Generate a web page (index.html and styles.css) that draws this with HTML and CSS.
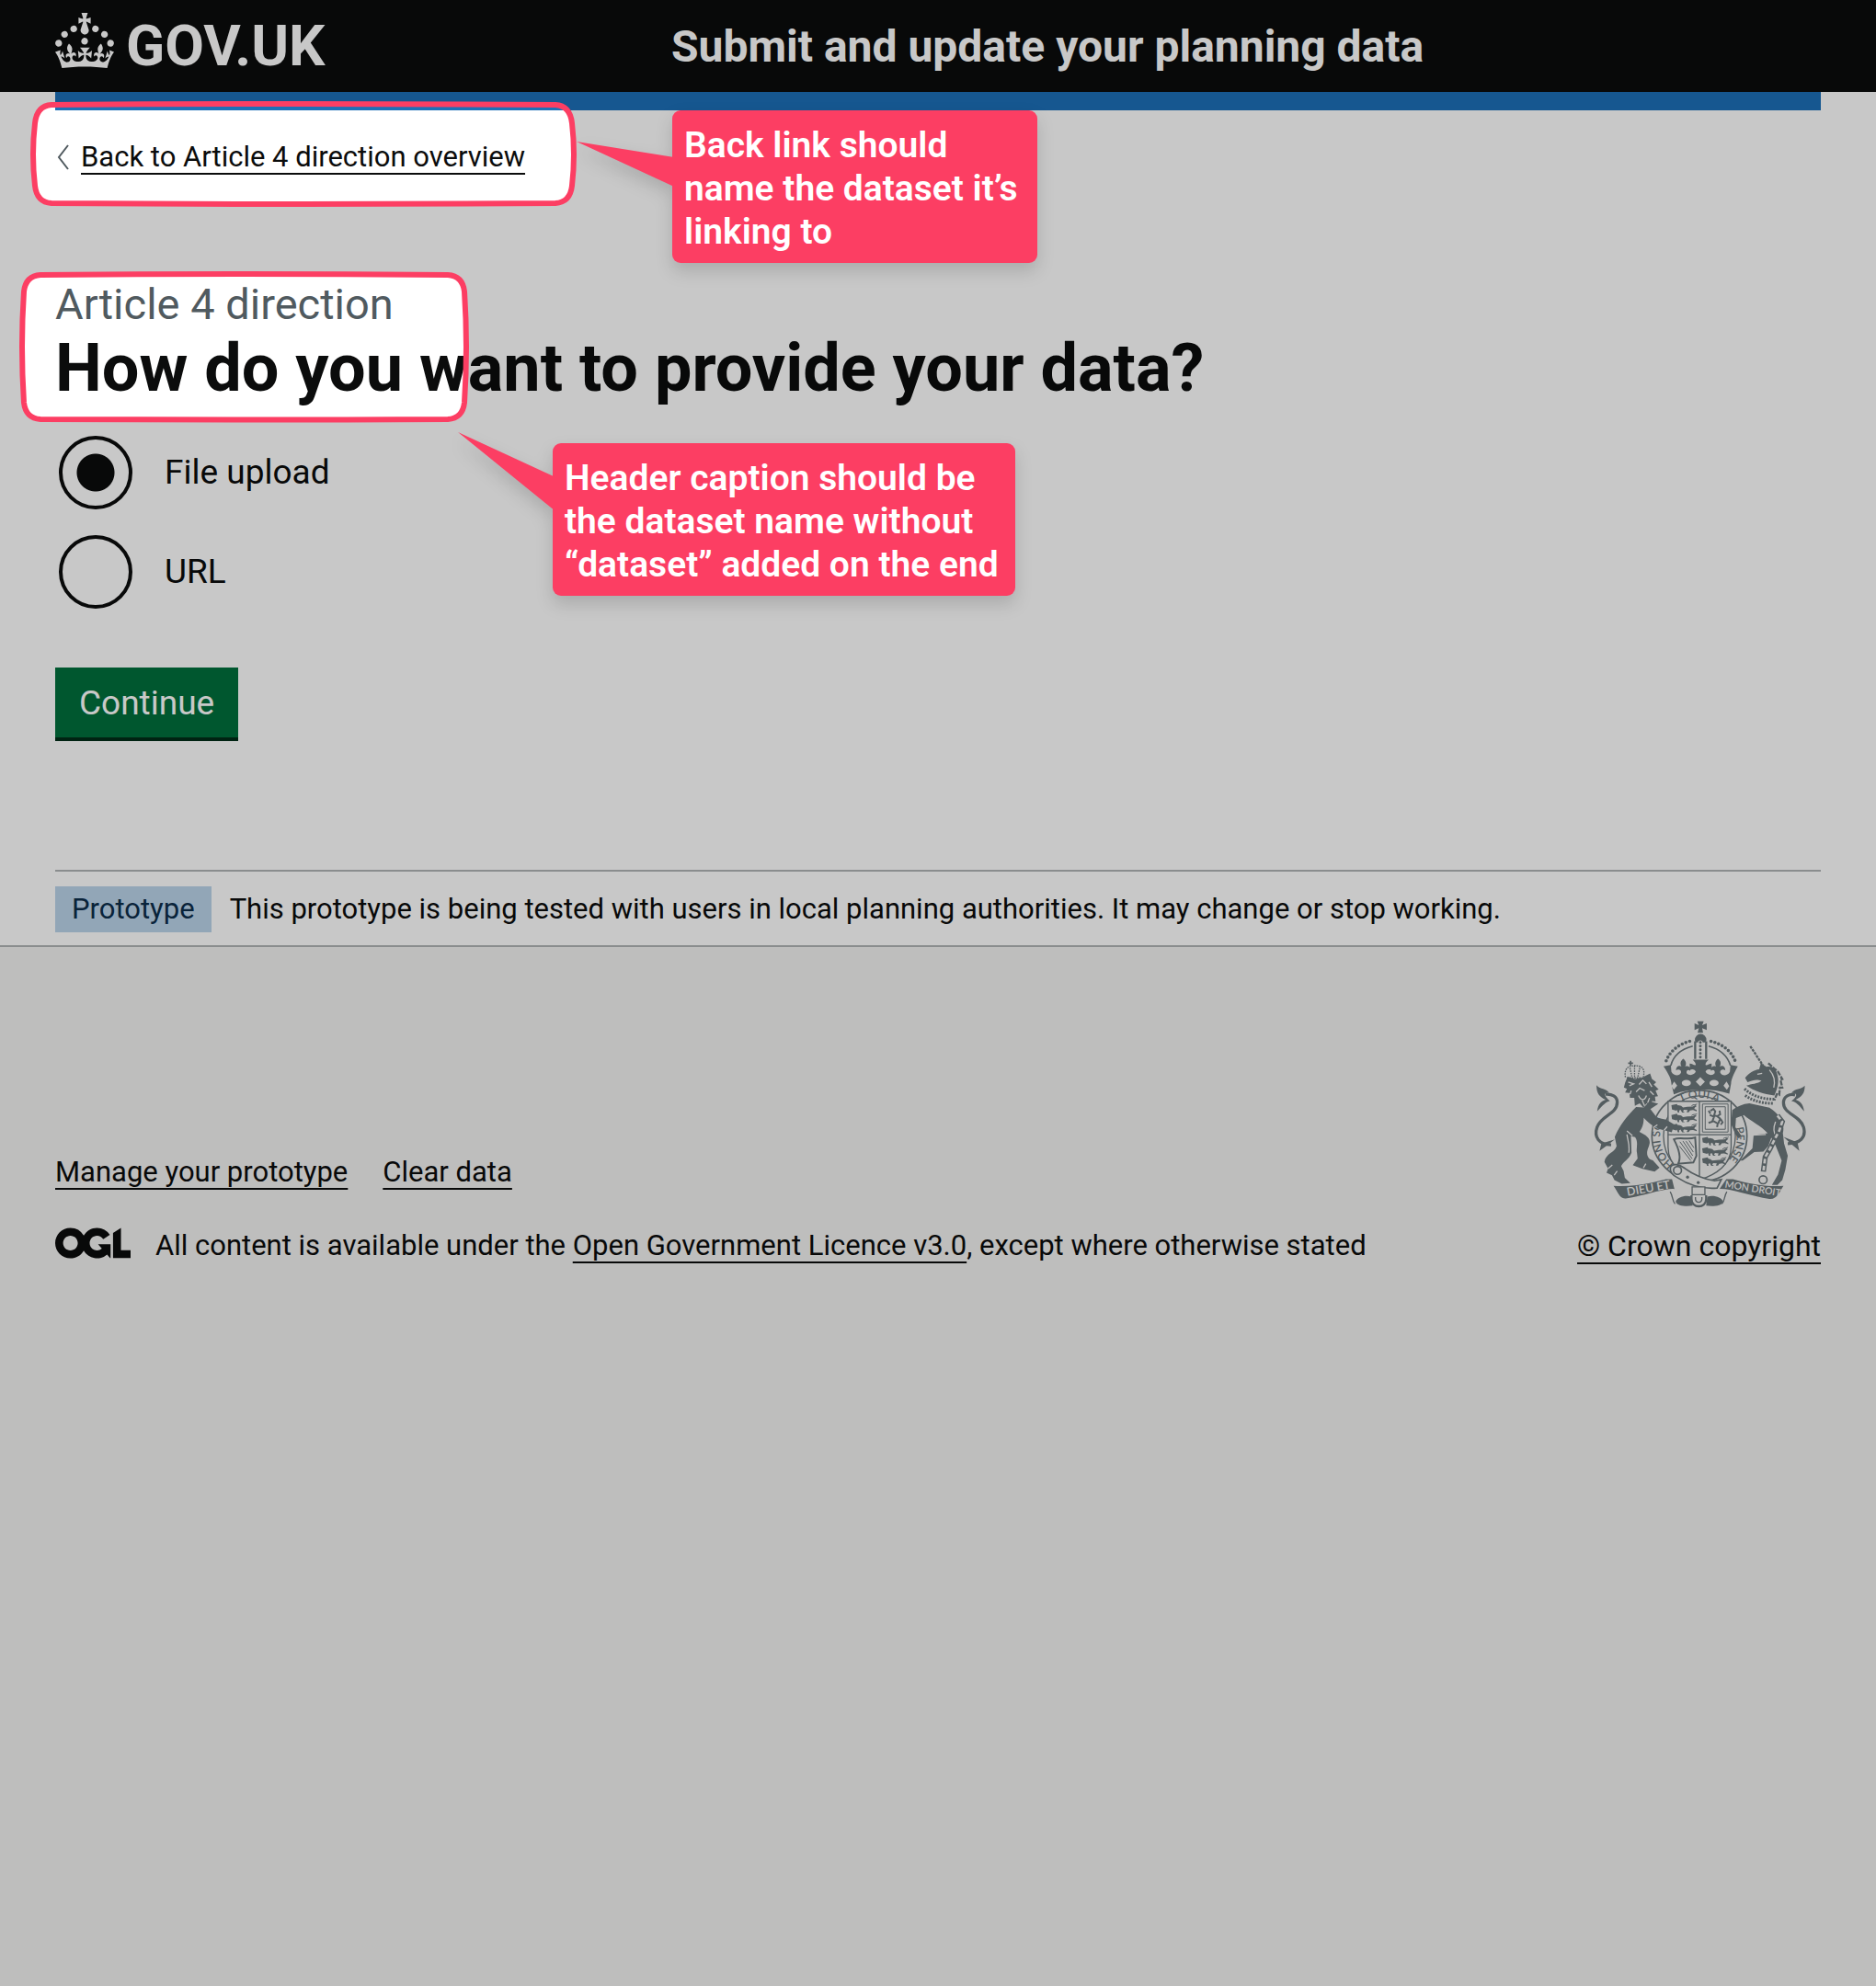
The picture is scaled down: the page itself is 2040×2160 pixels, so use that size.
FILE: index.html
```html
<!DOCTYPE html>
<html lang="en">
<head>
<meta charset="utf-8">
<meta name="viewport" content="width=device-width, initial-scale=1">
<title>How do you want to provide your data? - Submit and update your planning data</title>
<link rel="stylesheet" href="styles.css">
</head>
<body class="page">

<header class="header">
  <a class="header-logo" href="#" aria-label="GOV.UK">
    <svg class="crown" viewBox="0 0 32 30" aria-hidden="true"><path fill="currentColor" fill-rule="evenodd" d="M22.6 10.4c-1 .4-2-.1-2.4-1-.4-.9.1-2 1-2.4.9-.4 2 .1 2.4 1s-.1 2-1 2.4m-5.9 6.7c-.9.4-2-.1-2.4-1-.4-.9.1-2 1-2.4.9-.4 2 .1 2.4 1s-.1 2-1 2.4m10.8-3.7c-1 .4-2-.1-2.4-1-.4-.9.1-2 1-2.4.9-.4 2 .1 2.4 1s0 2-1 2.4m3.3 4.8c-1 .4-2-.1-2.4-1-.4-.9.1-2 1-2.4.9-.4 2 .1 2.4 1s-.1 2-1 2.4M17 4.7l2.3 1.2V2.5l-2.3.7-.2-.2.9-3h-3.4l.9 3-.2.2c-.1.1-2.3-.7-2.3-.7v3.4L15 4.7c.1.1.1.2.2.2l-1.3 4c-.1.2-.1.4-.1.6 0 1.1.8 2 1.9 2.2h.7c1-.2 1.9-1.1 1.9-2.1 0-.2 0-.4-.1-.6l-1.3-4c-.1-.2 0-.2.1-.3m-7.6 5.7c.9.4 2-.1 2.4-1 .4-.9-.1-2-1-2.4-.9-.4-2 .1-2.4 1s0 2 1 2.4m-5 3c.9.4 2-.1 2.4-1 .4-.9-.1-2-1-2.4-.9-.4-2 .1-2.4 1s.1 2 1 2.4m-3.2 4.8c.9.4 2-.1 2.4-1 .4-.9-.1-2-1-2.4-.9-.4-2 .1-2.4 1s0 2 1 2.4m14.8 11c4.4 0 8.6.3 12.3.8 1.1-4.5 2.4-7 3.7-8.8l-2.5-.9c.2 1.3.3 1.9 0 2.7-.4-.4-.8-1.1-1.1-2.3l-1.2 4c.7-.5 1.3-.8 2-.9-1.1 2.5-2.6 3.1-3.5 3-1.1-.2-1.7-1.2-1.5-2.1.3-1.2 1.5-1.5 2.1-.1 1.1-2.3-.8-3-2-2.3 1.9-1.9 2.1-3.5.6-5.6-2.1 1.6-2.1 3.2-1.2 5.5-1.2-1.4-3.2-.6-2.5 1.6.9-1.4 2.1-.5 1.9.8-.2 1.1-1.7 2.1-3.5 1.9-2.7-.2-2.9-2.1-2.9-3.6.7-.1 1.9.5 2.9 1.9l.4-4.3c-1.1 1.1-2.1 1.4-3.2 1.4.4-1.2 2.1-3 2.1-3h-5.4s1.7 1.9 2.1 3c-1.1 0-2.1-.2-3.2-1.4l.4 4.3c1-1.4 2.2-2 2.9-1.9-.1 1.5-.2 3.4-2.9 3.6-1.9.2-3.4-.8-3.5-1.9-.2-1.3 1-2.2 1.9-.8.7-2.3-1.2-3-2.5-1.6.9-2.2.9-3.9-1.2-5.5-1.5 2-1.3 3.7.6 5.6-1.2-.7-3.1 0-2 2.3.6-1.4 1.8-1.1 2.1.1.2.9-.3 1.9-1.5 2.1-.9.2-2.4-.5-3.5-3 .6 0 1.2.3 2 .9l-1.2-4c-.3 1.1-.7 1.9-1.1 2.3-.3-.8-.2-1.4 0-2.7l-2.9.9C1.3 23 2.6 25.5 3.7 30c3.7-.5 7.9-.8 12.3-.8"/></svg>
    <span>GOV.UK</span>
  </a>
  <a class="header-service" href="#">Submit and update your planning data</a>
</header>

<div class="container">
  <div class="header-bar"></div>
  <nav class="back">
    <svg class="back-arrow" viewBox="0 0 14 28" aria-hidden="true"><path d="M12 1L2 14l10 13" fill="none" stroke="#505a5f" stroke-width="2"/></svg>
    <a class="link" href="#">Back to Article 4 direction overview</a>
  </nav>

  <main>
    <p class="caption">Article 4 direction</p>
    <h1 class="title">How do you want to provide your data?</h1>
    <form class="form">
      <div class="radios">
        <div class="radio-row">
          <input class="radio" type="radio" id="file" name="source" checked>
          <label for="file">File upload</label>
        </div>
        <div class="radio-row">
          <input class="radio" type="radio" id="url" name="source">
          <label for="url">URL</label>
        </div>
      </div>
      <button class="button" type="button">Continue</button>
    </form>
  </main>

  <div class="phase">
    <strong class="tag">Prototype</strong>
    <span>This prototype is being tested with users in local planning authorities. It may change or stop working.</span>
  </div>
</div>

<footer class="footer">
  <div class="footer-meta">
    <div class="footer-links">
      <a class="link" href="#">Manage your prototype</a>
      <a class="link" href="#">Clear data</a>
    </div>
    <div class="licence">
      <svg class="ogl" viewBox="0 0 483.2 195.7" aria-hidden="true"><path fill="currentColor" d="M421.5 142.8V.1l-50.7 32.3v161.1h112.4v-50.7zm-122.3-9.6A47.12 47.12 0 0 1 221 97.8c0-26 21.1-47.1 47.1-47.1 16.7 0 31.4 8.7 39.7 21.8l42.7-27.2A97.63 97.63 0 0 0 268.1 0c-36.5 0-68.3 20.1-85.1 49.7A98 98 0 0 0 97.8 0C43.9 0 0 43.9 0 97.8s43.9 97.8 97.8 97.8c36.5 0 68.3-20.1 85.1-49.7a97.76 97.76 0 0 0 149.6 25.4l19.4 22.2h3v-87.8h-80l24.3 27.5zM97.8 145c-26 0-47.1-21.1-47.1-47.1s21.1-47.1 47.1-47.1 47.1 21.1 47.1 47.1S123.8 145 97.8 145"/></svg>
      <span>All content is available under the <a class="link" href="#">Open Government Licence v3.0</a>, except where otherwise stated</span>
    </div>
  </div>
  <a class="copyright" href="#">
    <svg class="arms" viewBox="99 88 702 616" aria-hidden="true">
      <defs>
        <path id="motto-left" d="M366 560A124 118 0 0 1 340 405"/>
        <path id="motto-top" d="M330 430A124 118 0 0 1 570 430"/>
        <path id="motto-right" d="M568 440A124 118 0 0 1 470 588"/>
        <g id="walking-lion">
          <path d="M0 3l8-3 10 2 6 5 14-2 18-1 8-4 5 3-6 4-2 5 8 4v4l-12-4-10 1-4 6h-7l3-7-12-1-3 5 6 4h-9l-5-9-5 3 1 6h-5l-3-9-6-1 3-4z"/>
          <path d="M52 2c6-6 14-2 18-6" fill="none" stroke="#6c777b" stroke-width="3"/>
        </g>
      </defs>
      <g fill="#6c777b">
        <!-- royal crown -->
        <path d="M443 90h21l-5 13 15-6v22l-15-6 3 15h-18l4-15-14 6V97l14 6z"/>
        <path d="M435 152a19 20 0 0 1 38 0l-4 8h-8c-1-9-15-9-16 0h-8z"/>
        <path d="M453 160v54" fill="none" stroke="#6c777b" stroke-width="9" stroke-linecap="round" stroke-dasharray="0 12"/>
        <path d="M418 156C380 166 350 190 338 228M488 156c40 10 70 34 82 72" fill="none" stroke="#6c777b" stroke-width="11" stroke-linecap="round" stroke-dasharray="0 13"/>
        <path d="M428 172C390 182 364 204 356 236M480 172c38 10 62 32 72 64" fill="none" stroke="#6c777b" stroke-width="5"/>
        <path d="M436 156v58M472 156v58" fill="none" stroke="#6c777b" stroke-width="7"/>
        <path d="M332 238l24-4 2 22c8 14 26 16 32 2-1-12-12-10-17-6 0-14 10-18 18-13-6-12-2-20 6-26 8 6 12 16 6 26 10-4 18 2 17 14-8-6-14 0-12 8 8 10 26 6 30-6-6-10-14-8-20-4v-22c8 0 12 6 20 5 0-10-6-12-10-18h52c-5 6-10 8-10 18 8 1 12-5 20-5v22c-6-4-14-6-20 4 4 12 22 16 30 6 2-8-4-14-12-8-1-12 7-18 17-14-6-10-2-20 6-26 8 6 12 14 6 26 8-5 18-1 18 13-5-4-16-6-17 6 6 14 24 12 32-2l2-22 24 4c-14 26-22 44-22 56l-6 34c-60-18-130-18-182 2l-8-34c0-14-8-32-26-58z"/>
        <g fill="#f3f2f1">
          <ellipse cx="407" cy="293" rx="15" ry="10"/><ellipse cx="498" cy="293" rx="15" ry="10"/>
          <path d="M453 274l15 15-15 15-15-15zM367 288l10 14-11 13-8-12zM539 288l-10 14 11 13 8-12z"/>
        </g>
        <!-- garter -->
        <ellipse cx="450" cy="467" rx="156" ry="150" fill="none" stroke="#6c777b" stroke-width="5"/>
        <ellipse cx="450" cy="467" rx="118" ry="132" fill="none" stroke="#6c777b" stroke-width="4"/>
        <g class="motto">
          <text><textPath href="#motto-left">HONI SOI</textPath></text>
          <text text-anchor="middle"><textPath href="#motto-top" startOffset="50%">T QUI A</textPath></text>
          <text><textPath href="#motto-right">PENSE</textPath></text>
        </g>
        <!-- shield -->
        <path d="M347 353h207v150c0 55-45 90-104 108-60-18-103-53-103-108z" fill="#f3f2f1" stroke="#6c777b" stroke-width="4"/>
        <path d="M450 353v250M347 463h207" stroke="#6c777b" stroke-width="4"/>
        <use href="#walking-lion" x="372" y="366"/><use href="#walking-lion" x="372" y="398"/><use href="#walking-lion" x="372" y="431"/>
        <use href="#walking-lion" x="476" y="474"/><use href="#walking-lion" x="474" y="508"/><use href="#walking-lion" x="468" y="541"/>
        <path d="M358 366l18-4 6 12-8 10-14-4zM358 398l18-4 6 12-8 10-14-4zM358 431l18-4 6 12-8 10-14-4zM459 474l18-4 6 12-8 10-14-4zM459 508l18-4 6 12-8 10-14-4zM459 541l18-4 6 12-8 10-14-4z"/>
        <path d="M460 362h84v92h-84zM469 371h66v74h-66z" fill="none" stroke="#6c777b" stroke-width="3"/>
        <path d="M486 384l10-6 6 8-4 14 10 2 10-6-2-12M484 398l14 6-6 16-12 4M496 418l14 8-2 12M508 402l10 8-6 16M480 384l6 10M520 412l6 10-6 8" fill="none" stroke="#6c777b" stroke-width="6"/>
        <path d="M366 478c22-10 44 4 70-6l4 60-10 22-50 4c12-22 2-50-14-80z" fill="none" stroke="#6c777b" stroke-width="6"/>
        <path d="M386 486l40 56M396 484l32 48M406 484l24 36M416 482l16 24M384 500l38 48" stroke="#6c777b" stroke-width="3"/>
        <!-- strap and buckle -->
        <path d="M356 568c6-12 28-8 44 4 30 22 60 36 100 42l22-4-14 28c-50 4-90-8-130-34-16-8-28-22-22-36z" fill="#f3f2f1" stroke="#6c777b" stroke-width="5"/>
        <circle cx="378" cy="580" r="13" fill="none" stroke="#6c777b" stroke-width="5"/>
        <circle cx="411" cy="602" r="5"/><circle cx="446" cy="620" r="5"/>
        <path d="M372 682c6-14 30-22 52-16l4 30c-22 2-52 2-56-14zM528 682c-6-14-30-22-52-16l-4 30c22 2 52 2 56-14z"/>
        <path d="M426 634h42v26h-42z" fill="#f3f2f1" stroke="#6c777b" stroke-width="4"/>
        <path d="M424 662v12c0 32 48 32 48 0v-12" fill="#f3f2f1" stroke="#6c777b" stroke-width="7"/>
        <path d="M437 668v6c0 14 21 14 21 0v-6" fill="none" stroke="#6c777b" stroke-width="4"/>
        <!-- lion -->
        <path d="M206 292l8-20 24 8 22-4 28-14 6 18 14 10-8 8 16 16-10 4 8 18-10 2 2 16-12-2-4 18-14-10-10 14-12-14-16 8-2-26-14 0-2-16-14-2 6-12-10-4z"/>
        <path d="M216 290l18 6-14 6M252 298l12-14 12 12M242 322l12-12 16 8M250 334c8 18 20 18 26 0M262 350l8 18M284 290l10 16M288 320l12 12M226 318l-4 12M286 342l-6 16" fill="none" stroke="#f3f2f1" stroke-width="4"/>
        <path d="M242 372c-30 30-54 60-70 98l6 30c-6 22-36 24-40 52l12 22-5 14 18 8 8 16 24 12 28-2-18-18-4-22-8-16c6-14 26-22 34-44l-2-54 14 3c12 18 2 36 6 52l2 18-16 22 32 12 40 9 16-13-22-24c-18-4-24-22-14-44 8-20 2-28-10-38l-20-12c12-16 14-30 14-46 20 22 38 34 64 40l28 8 8-26-26-16-30-6-22-28 26-18-28-8-20 20z"/>
        <path d="M212 450l18 16M212 462c2 18 10 34 6 60M150 574l14-12M170 596l10-14M266 572l8-14M298 440l14-10M334 448l10-12" fill="none" stroke="#f3f2f1" stroke-width="4"/>
        <path d="M160 496c-38 0-58-24-46-58 14-40 66-42 66-82 0-18-18-28-38-26" fill="none" stroke="#6c777b" stroke-width="10"/>
        <path d="M112 300c14 16 30 8 42 26-18-4-20 8 2 26-16 4-20 12-42 34 4-26 14-32 28-38-20-10-30-20-30-48zM172 478l-20 16-30 22 6-24z"/>
        <path d="M207 274c-6-34 16-38 31-38s36 4 28 36M212 276h50M237 236v36M222 244l6 28M254 244l-6 28" fill="none" stroke="#6c777b" stroke-width="4" stroke-dasharray="5 3"/>
        <path d="M216 228h16M224 220v16" stroke="#6c777b" stroke-width="5"/>
        <!-- unicorn -->
        <path d="M617 172l42 64" fill="none" stroke="#6c777b" stroke-width="7" stroke-dasharray="9 3"/>
        <path d="M600 276c14-18 30-26 46-28l6-20 18 12c20-4 30 6 34 20 8 20 6 44-8 74-36-4-66-14-92-32 16-6 38-6 50-16-18-6-26-2-46 4z"/>
        <path d="M676 228l20 18 12 10 14 24-6 2 6 26-8 0-2 24-8-2-8 20" fill="none" stroke="#6c777b" stroke-width="7" stroke-dasharray="16 4"/>
        <path d="M640 264l16-3M680 250c14 16 20 34 14 58" fill="none" stroke="#f3f2f1" stroke-width="4"/>
        <path d="M598 312c30 28 66 34 98 34M600 334c30 20 60 26 92 26" fill="none" stroke="#6c777b" stroke-width="9" stroke-dasharray="6 4"/>
        <path d="M558 382c16-12 34-20 56-22l66 14c32 20 52 50 44 84l4 34 12 40-8 46-10 34-16 16h-18l20-34 12-46-20-50-14-26-10 28-16 18-30 2-38 28-8 0 40-40 4-44 46-6c-20-24-56-40-78-60l-26 10-2 30 18 26-6 12-12-14-14-34z"/>
        <path d="M622 464l46-2M700 420c-8 20-8 34 2 48" fill="none" stroke="#f3f2f1" stroke-width="4"/>
        <path d="M740 492c38 0 62-18 52-54-12-40-66-42-66-80 0-22 20-30 38-26" fill="none" stroke="#6c777b" stroke-width="10"/>
        <path d="M796 302c-14 14-30 8-44 24 20-2 22 10 0 26 18 4 22 12 42 34-4-26-14-32-28-38 20-10 30-20 30-46zM726 470l22 20 30 26-6-28z"/>
        <path d="M706 400l16 20-10 30-14 26-16 32-16 28-6 48" fill="none" stroke="#6c777b" stroke-width="17"/>
        <path d="M706 400l16 20-10 30-14 26-16 32-16 28-6 48" fill="none" stroke="#f3f2f1" stroke-width="8" stroke-dasharray="15 8"/>
        <circle cx="659" cy="611" r="13" fill="none" stroke="#6c777b" stroke-width="5"/>
        <!-- scrolls -->
        <path d="M168 631c60 4 120-8 172-22h20l8 32c-30-4-104 24-160 31-22 2-26-24-40-41zM726 631c-60 4-116-8-166-22h-22l-22 32c36-2 104 24 164 33 26 2 34-26 46-43z"/>
        <path d="M354 650c10 16 6 30 16 40M540 650c-10 16-6 30-16 40" fill="none" stroke="#6c777b" stroke-width="4"/>
        <g class="scroll-text">
          <text transform="translate(214 664) rotate(-10)">DIEU ET</text>
          <text transform="translate(532 636) rotate(9)" class="scroll-small">MON DROIT</text>
        </g>
      </g>
    </svg>
    <span>© Crown copyright</span>
  </a>
</footer>

<!-- dimmed layer with two spotlit areas -->
<svg class="dimmer" aria-hidden="true">
  <defs>
    <path id="spot-back" d="M56 114Q330 112 604 114Q620 115 622 134Q626 168 622 202Q620 220 604 221Q330 223 56 221Q40 220 38 202Q34 168 38 134Q40 115 56 114Z"/>
    <path id="spot-title" d="M44 299Q265 297 487 299Q503 300 505 317Q509 377 505 438Q503 455 487 456Q265 457 44 456Q28 455 26 438Q22 377 26 317Q28 300 44 299Z"/>
    <mask id="cutouts" maskUnits="userSpaceOnUse" x="0" y="0" width="100%" height="100%">
      <rect width="100%" height="100%" fill="#fff"/>
      <use href="#spot-back"/>
      <use href="#spot-title"/>
    </mask>
  </defs>
  <rect width="100%" height="100%" fill="#000" fill-opacity=".216" mask="url(#cutouts)"/>
  <g fill="none" stroke="#fc3e63" stroke-width="6">
    <use href="#spot-back"/>
    <use href="#spot-title"/>
  </g>
</svg>

<aside class="callout callout-back">
  <svg class="pointer pointer-back" viewBox="0 0 106 50" aria-hidden="true"><path d="M0 0L106 17v32z" fill="#fc3e63"/></svg>
  <p>Back link should<br>name the dataset it’s<br>linking to</p>
</aside>
<aside class="callout callout-caption">
  <svg class="pointer pointer-caption" viewBox="0 0 106 86" aria-hidden="true"><path d="M0 0L106 49v37z" fill="#fc3e63"/></svg>
  <p>Header caption should be<br>the dataset name without<br>“dataset” added on the end</p>
</aside>

</body>
</html>
```

FILE: styles.css
```css
* {
  box-sizing: border-box;
}

html {
  background: #f3f2f1;
}

.page {
  position: relative;
  display: flex;
  flex-direction: column;
  min-height: 100vh;
  margin: 0;
  background: #fff;
  color: #0b0c0c;
  font-family: Roboto, Arial, sans-serif;
  font-size: 31px;
  line-height: 40px;
}

p,
h1 {
  margin: 0;
}

.link {
  color: inherit;
  text-decoration: underline;
  text-decoration-thickness: 2px;
  text-underline-offset: 7px;
}

/* Header */
.header {
  display: grid;
  grid-template-columns: 670px 1fr;
  align-items: center;
  height: 100px;
  padding: 0 60px;
  background: #0b0c0c;
  color: #fff;
}

.header a {
  color: inherit;
  font-weight: 700;
  text-decoration: none;
}

.header-logo {
  display: flex;
  align-items: center;
  gap: 13px;
  font-size: 62px;
  line-height: 60px;
}

.crown {
  width: 64px;
  height: 60px;
  margin-bottom: 12px;
}

.header-service {
  padding-top: 2px;
  font-size: 48px;
  line-height: 60px;
}

.container {
  padding: 0 60px;
}

.header-bar {
  height: 20px;
  background: #1d70b8;
}

/* Back link */
.back {
  display: flex;
  align-items: center;
  gap: 12px;
  margin-top: 31px;
  padding-left: 2px;
}

.back-arrow {
  width: 14px;
  height: 28px;
}

/* Question */
.caption {
  margin-top: 110px;
  color: #505a5f;
  font-size: 47px;
  line-height: 60px;
}

.title {
  font-size: 72px;
  line-height: 80px;
}

.form {
  display: flex;
  flex-direction: column;
  align-items: flex-start;
  gap: 64px;
  margin-top: 33px;
  font-size: 37px;
}

.radios {
  display: flex;
  flex-direction: column;
  gap: 28px;
}

.radio-row {
  display: flex;
  align-items: center;
  gap: 35px;
  padding-left: 4px;
}

.radio {
  appearance: none;
  width: 80px;
  height: 80px;
  margin: 0;
  border: 4px solid #0b0c0c;
  border-radius: 50%;
}

.radio:checked {
  background: radial-gradient(circle, #0b0c0c 20px, transparent 21px);
}

.button {
  margin-bottom: 4px;
  padding: 19px 26px 17px;
  border: 0;
  background: #00703c;
  box-shadow: 0 4px 0 #002d18;
  color: #fff;
  font: inherit;
  line-height: 40px;
}

/* Phase banner */
.phase {
  display: flex;
  align-items: center;
  gap: 20px;
  margin-top: 140px;
  padding: 16px 0 14px;
  border-top: 2px solid #b1b4b6;
}

.tag {
  padding: 5px 18px;
  background: #bbd4ea;
  color: #0c2d4a;
  font-weight: 400;
}

/* Footer */
.footer {
  flex: 1;
  display: flex;
  justify-content: space-between;
  align-items: flex-start;
  padding: 80px 60px 0;
  border-top: 2px solid #b1b4b6;
  background: #f3f2f1;
}

.footer-meta {
  display: flex;
  flex-direction: column;
  gap: 40px;
  padding-top: 145px;
}

.footer-links {
  display: flex;
  gap: 38px;
}

.licence {
  display: flex;
  gap: 27px;
}

.ogl {
  width: 82px;
  height: 34px;
}

.copyright {
  display: flex;
  flex-direction: column;
  align-items: center;
  gap: 21px;
  color: inherit;
  font-size: 32px;
  text-decoration-thickness: 2px;
  text-underline-offset: 7px;
}

.arms {
  width: 234px;
  height: 204px;
}

.motto {
  font: 600 36px Lato, sans-serif;
}

.scroll-text {
  fill: #f3f2f1;
  font: 600 38px Lato, sans-serif;
}

.scroll-small {
  font-size: 32px;
}

/* Annotations drawn over the page */
.dimmer {
  position: absolute;
  inset: 0;
  width: 100%;
  height: 100%;
  pointer-events: none;
}

.callout {
  position: absolute;
  height: 166px;
  padding: 15px 13px 0;
  border-radius: 9px;
  background: #fc3e63;
  color: #fff;
  filter: drop-shadow(0 9px 9px rgba(0, 0, 0, 0.14));
  font-size: 39px;
  font-weight: 600;
  line-height: 47px;
  white-space: nowrap;
}

.callout-back {
  top: 120px;
  left: 731px;
  width: 397px;
}

.callout-caption {
  top: 482px;
  left: 601px;
  width: 503px;
}

.pointer {
  position: absolute;
  width: 106px;
}

.pointer-back {
  top: 34px;
  left: -104px;
}

.pointer-caption {
  top: -12px;
  left: -103px;
}
```
